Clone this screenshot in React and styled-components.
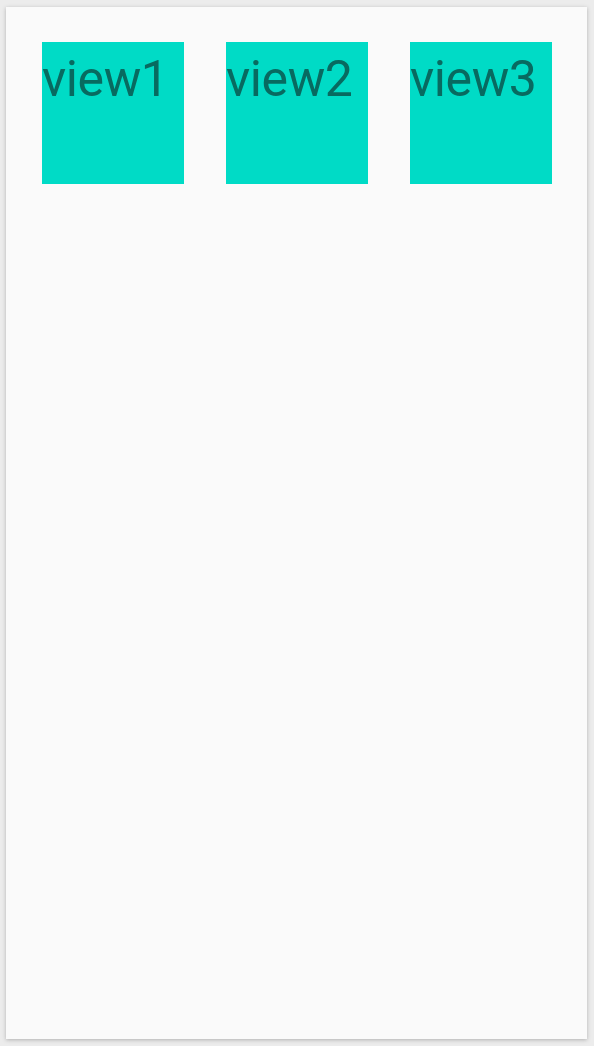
import React from 'react';
import styled, { createGlobalStyle } from 'styled-components';

const GlobalStyle = createGlobalStyle`
  html, body {
    margin: 0;
    padding: 0;
    background: #ececec;
  }
  body {
    font-family: Roboto, "Liberation Sans", sans-serif;
  }
`;

const Frame = styled.div`
  width: 594px;
  height: 1046px;
  box-sizing: border-box;
  padding: 7px 7px 7px 6px;
  display: flex;
`;

const Screen = styled.div`
  flex: 1;
  background: #fafafa;
  box-shadow: 0 1px 4px rgba(0, 0, 0, 0.25);
  display: flex;
  align-items: flex-start;
  justify-content: space-between;
  padding: 35px 35px 0 36px;
`;

const Tile = styled.div`
  width: 142px;
  height: 142px;
  background: #00dbc6;
  color: #086a60;
  font-size: 50px;
  line-height: 56px;
  padding-top: 9px;
  box-sizing: border-box;
  white-space: nowrap;
  letter-spacing: -0.4px;
`;

const App = () => {
  const views = ['view1', 'view2', 'view3'];

  return (
    <>
      <GlobalStyle />
      <Frame>
        <Screen>
          {views.map((v) => (
            <Tile key={v}>{v}</Tile>
          ))}
        </Screen>
      </Frame>
    </>
  );
};

export default App;
